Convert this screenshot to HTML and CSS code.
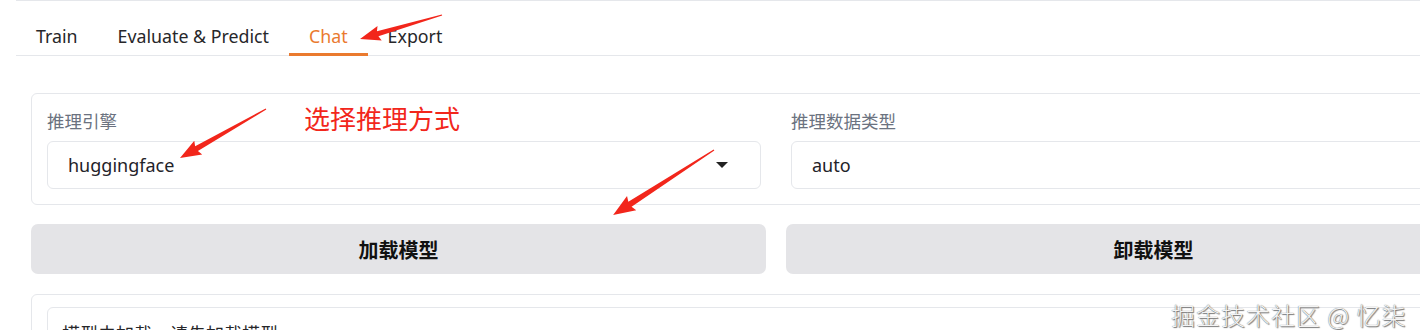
FILE: index.html
```html
<!DOCTYPE html>
<html lang="zh">
<head>
<meta charset="utf-8">
<title>Chat</title>
<link rel="stylesheet" href="styles.css">
</head>
<body>
<div class="app">
  <div class="tabs">
    <div class="tab-nav">
      <button class="tab">Train</button>
      <button class="tab">Evaluate &amp; Predict</button>
      <button class="tab active">Chat</button>
      <button class="tab">Export</button>
    </div>
    <div class="tab-body">
      <div class="panel fields">
        <div class="field">
          <div class="label">推理引擎</div>
          <div class="select">
            <span>huggingface</span>
            <span class="caret"></span>
          </div>
        </div>
        <div class="field">
          <div class="label">推理数据类型</div>
          <div class="select">
            <span>auto</span>
          </div>
        </div>
      </div>
      <div class="btn-row">
        <button class="btn">加载模型</button>
        <button class="btn">卸载模型</button>
      </div>
      <div class="panel chat">
        <div class="chat-inner">模型未加载，请先加载模型</div>
      </div>
    </div>
  </div>
</div>

<svg class="marks" width="1420" height="330" viewBox="0 0 1420 330" xmlns="http://www.w3.org/2000/svg">
  <g fill="#f2261b">
    <polygon transform="translate(442,15) rotate(163.7)" points="0,-0.6 67,-2.6 65,-7.5 85.4,0 65,7.5 67,2.6 0,0.6"/>
    <polygon transform="translate(266,109) rotate(150.3)" points="0,-0.6 80,-2.8 78,-8 99,0 78,8 80,2.8 0,0.6"/>
    <polygon transform="translate(714,150) rotate(147.2)" points="0,-0.6 100,-3 98,-8.5 120,0 98,8.5 100,3 0,0.6"/>
  </g>
</svg>
<div class="note">选择推理方式</div>
<div class="watermark">掘金技术社区 @ 忆柒</div>
</body>
</html>
```

FILE: styles.css
```css
html, body {
  margin: 0;
  padding: 0;
  overflow: hidden;
  background: #ffffff;
}
body {
  width: 1420px;
  height: 330px;
  position: relative;
  font-family: "Noto Sans", "Noto Sans CJK SC", sans-serif;
  color: #1f2329;
}
.app {
  width: 1620px;
  padding-left: 16px;
}
.tabs {
  border-top: 1px solid #e5e7eb;
}
.tab-nav {
  display: flex;
  align-items: flex-end;
  height: 55px;
  box-sizing: border-box;
  border-bottom: 1px solid #e5e7eb;
}
.tab {
  height: 38px;
  margin-bottom: -1px;
  padding: 0 20px;
  border: none;
  border-bottom: 3px solid transparent;
  background: none;
  font-family: inherit;
  font-size: 17.8px;
  color: #27272a;
  line-height: 34px;
}
.tab.active {
  color: #ea7a2f;
  border-bottom-color: #ea7a2f;
}
.tab-body {
  padding: 37px 15px 0 15px;
  width: 1490px;
}
.panel {
  border: 1px solid #e5e7eb;
  border-radius: 6px;
  background: #fff;
}
.fields {
  display: flex;
  gap: 30px;
  padding: 15px;
}
.field {
  flex: 1;
}
.label {
  font-size: 17.5px;
  line-height: 24px;
  color: #6b7280;
  margin-bottom: 8px;
}
.select {
  height: 48px;
  box-sizing: border-box;
  border: 1px solid #e5e7eb;
  border-radius: 6px;
  padding: 0 32px 0 20px;
  display: flex;
  align-items: center;
  justify-content: space-between;
  font-size: 18px;
  color: #1f2329;
}
.caret {
  width: 0;
  height: 0;
  border-left: 6px solid transparent;
  border-right: 6px solid transparent;
  border-top: 6px solid #222;
}
.btn-row {
  display: flex;
  gap: 20px;
  margin-top: 19px;
}
.btn {
  flex: 1;
  height: 50px;
  border: none;
  border-radius: 7px;
  background: #e4e4e7;
  font-family: "Noto Sans CJK SC", sans-serif;
  font-size: 20px;
  font-weight: 700;
  color: #111;
}
.chat {
  margin-top: 20px;
  padding: 12px 15px;
  height: 200px;
}
.chat-inner {
  border: 1px solid #e5e7eb;
  border-radius: 6px;
  padding: 12px 14px;
  font-size: 18px;
  color: #27272a;
  height: 150px;
}
.marks {
  position: absolute;
  left: 0;
  top: 0;
  pointer-events: none;
}
.note {
  position: absolute;
  left: 304px;
  top: 100px;
  font-family: "Noto Sans CJK SC", sans-serif;
  font-size: 26px;
  line-height: 36px;
  color: #f2261b;
}
.watermark {
  position: absolute;
  left: 1171px;
  top: 299px;
  font-family: "Noto Sans CJK SC", sans-serif;
  font-size: 24px;
  font-weight: 300;
  letter-spacing: 1px;
  line-height: 32px;
  color: #f4f4f4;
  text-shadow: 0 0 1px #555, 1px 1px 1px #777;
  white-space: nowrap;
}
```
